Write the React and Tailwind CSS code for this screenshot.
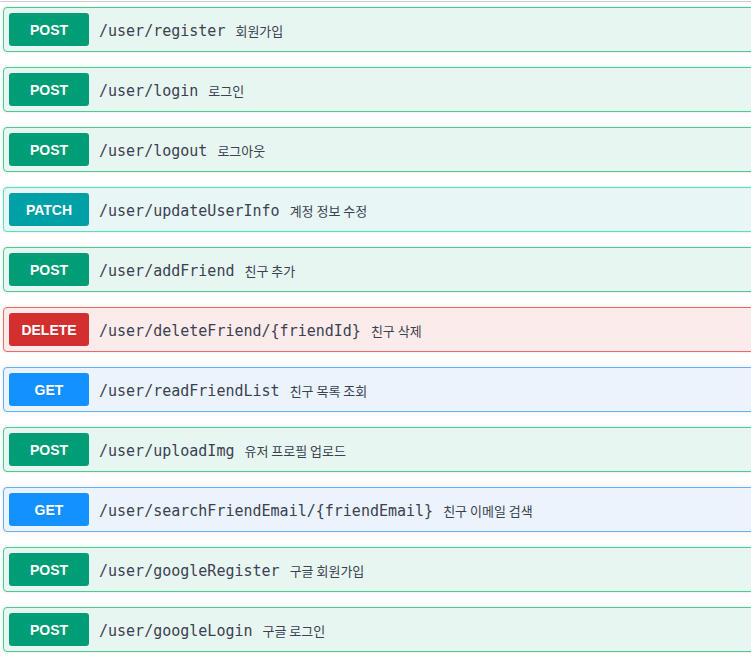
import React from "react";

const styles = {
  POST: {
    row: "bg-[#e8f6f1] border-[#49cc90]",
    badge: "bg-[#009d77]",
  },
  PATCH: {
    row: "bg-[#e9f6f6] border-[#50e3c2]",
    badge: "bg-[#00a0a7]",
  },
  DELETE: {
    row: "bg-[#fbeceb] border-[#f26868]",
    badge: "bg-[#d32f2f]",
  },
  GET: {
    row: "bg-[#ebf4fc] border-[#61affe]",
    badge: "bg-[#1391ff]",
  },
};

const ops = [
  ["POST", "/user/register", "회원가입"],
  ["POST", "/user/login", "로그인"],
  ["POST", "/user/logout", "로그아웃"],
  ["PATCH", "/user/updateUserInfo", "계정 정보 수정"],
  ["POST", "/user/addFriend", "친구 추가"],
  ["DELETE", "/user/deleteFriend/{friendId}", "친구 삭제"],
  ["GET", "/user/readFriendList", "친구 목록 조회"],
  ["POST", "/user/uploadImg", "유저 프로필 업로드"],
  ["GET", "/user/searchFriendEmail/{friendEmail}", "친구 이메일 검색"],
  ["POST", "/user/googleRegister", "구글 회원가입"],
  ["POST", "/user/googleLogin", "구글 로그인"],
];

const Operation = ({ method, path, summary }) => {
  const s = styles[method];
  return (
    <div
      className={`flex items-center h-[45px] mb-[15px] border rounded-[4px] pl-[5px] w-[770px] shadow-[0_0_3px_rgba(0,0,0,0.12)] ${s.row}`}
    >
      <span
        className={`w-[80px] h-[33px] flex items-center justify-center pt-[2px] rounded-[3px] text-white text-[14px] font-bold [text-shadow:0_1px_0_rgba(0,0,0,0.1)] ${s.badge}`}
        style={{ fontFamily: '"Liberation Sans", Arial, sans-serif' }}
      >
        {method}
      </span>
      <div className="pl-[10px] leading-[20px] whitespace-nowrap pt-[2px]">
        <span
          className="pr-[10px] text-[15px] text-[#3b4151]"
          style={{ fontFamily: '"DejaVu Sans Mono", "Liberation Mono", monospace' }}
        >
          {path}
        </span>
        <span
          className="text-[13px] text-[#3b4151]"
          style={{ fontFamily: '"Noto Sans CJK KR", "Noto Sans", sans-serif' }}
        >
          {summary}
        </span>
      </div>
    </div>
  );
};

export default function App() {
  return (
    <div className="w-[751px] h-[657px] overflow-hidden bg-white">
      <div className="h-[1px] mt-[1px] bg-[#d0d0d0]" />
      <div className="pl-[3px] pt-[5px]">
        {ops.map(([m, p, d]) => (
          <Operation key={p} method={m} path={p} summary={d} />
        ))}
      </div>
    </div>
  );
}
